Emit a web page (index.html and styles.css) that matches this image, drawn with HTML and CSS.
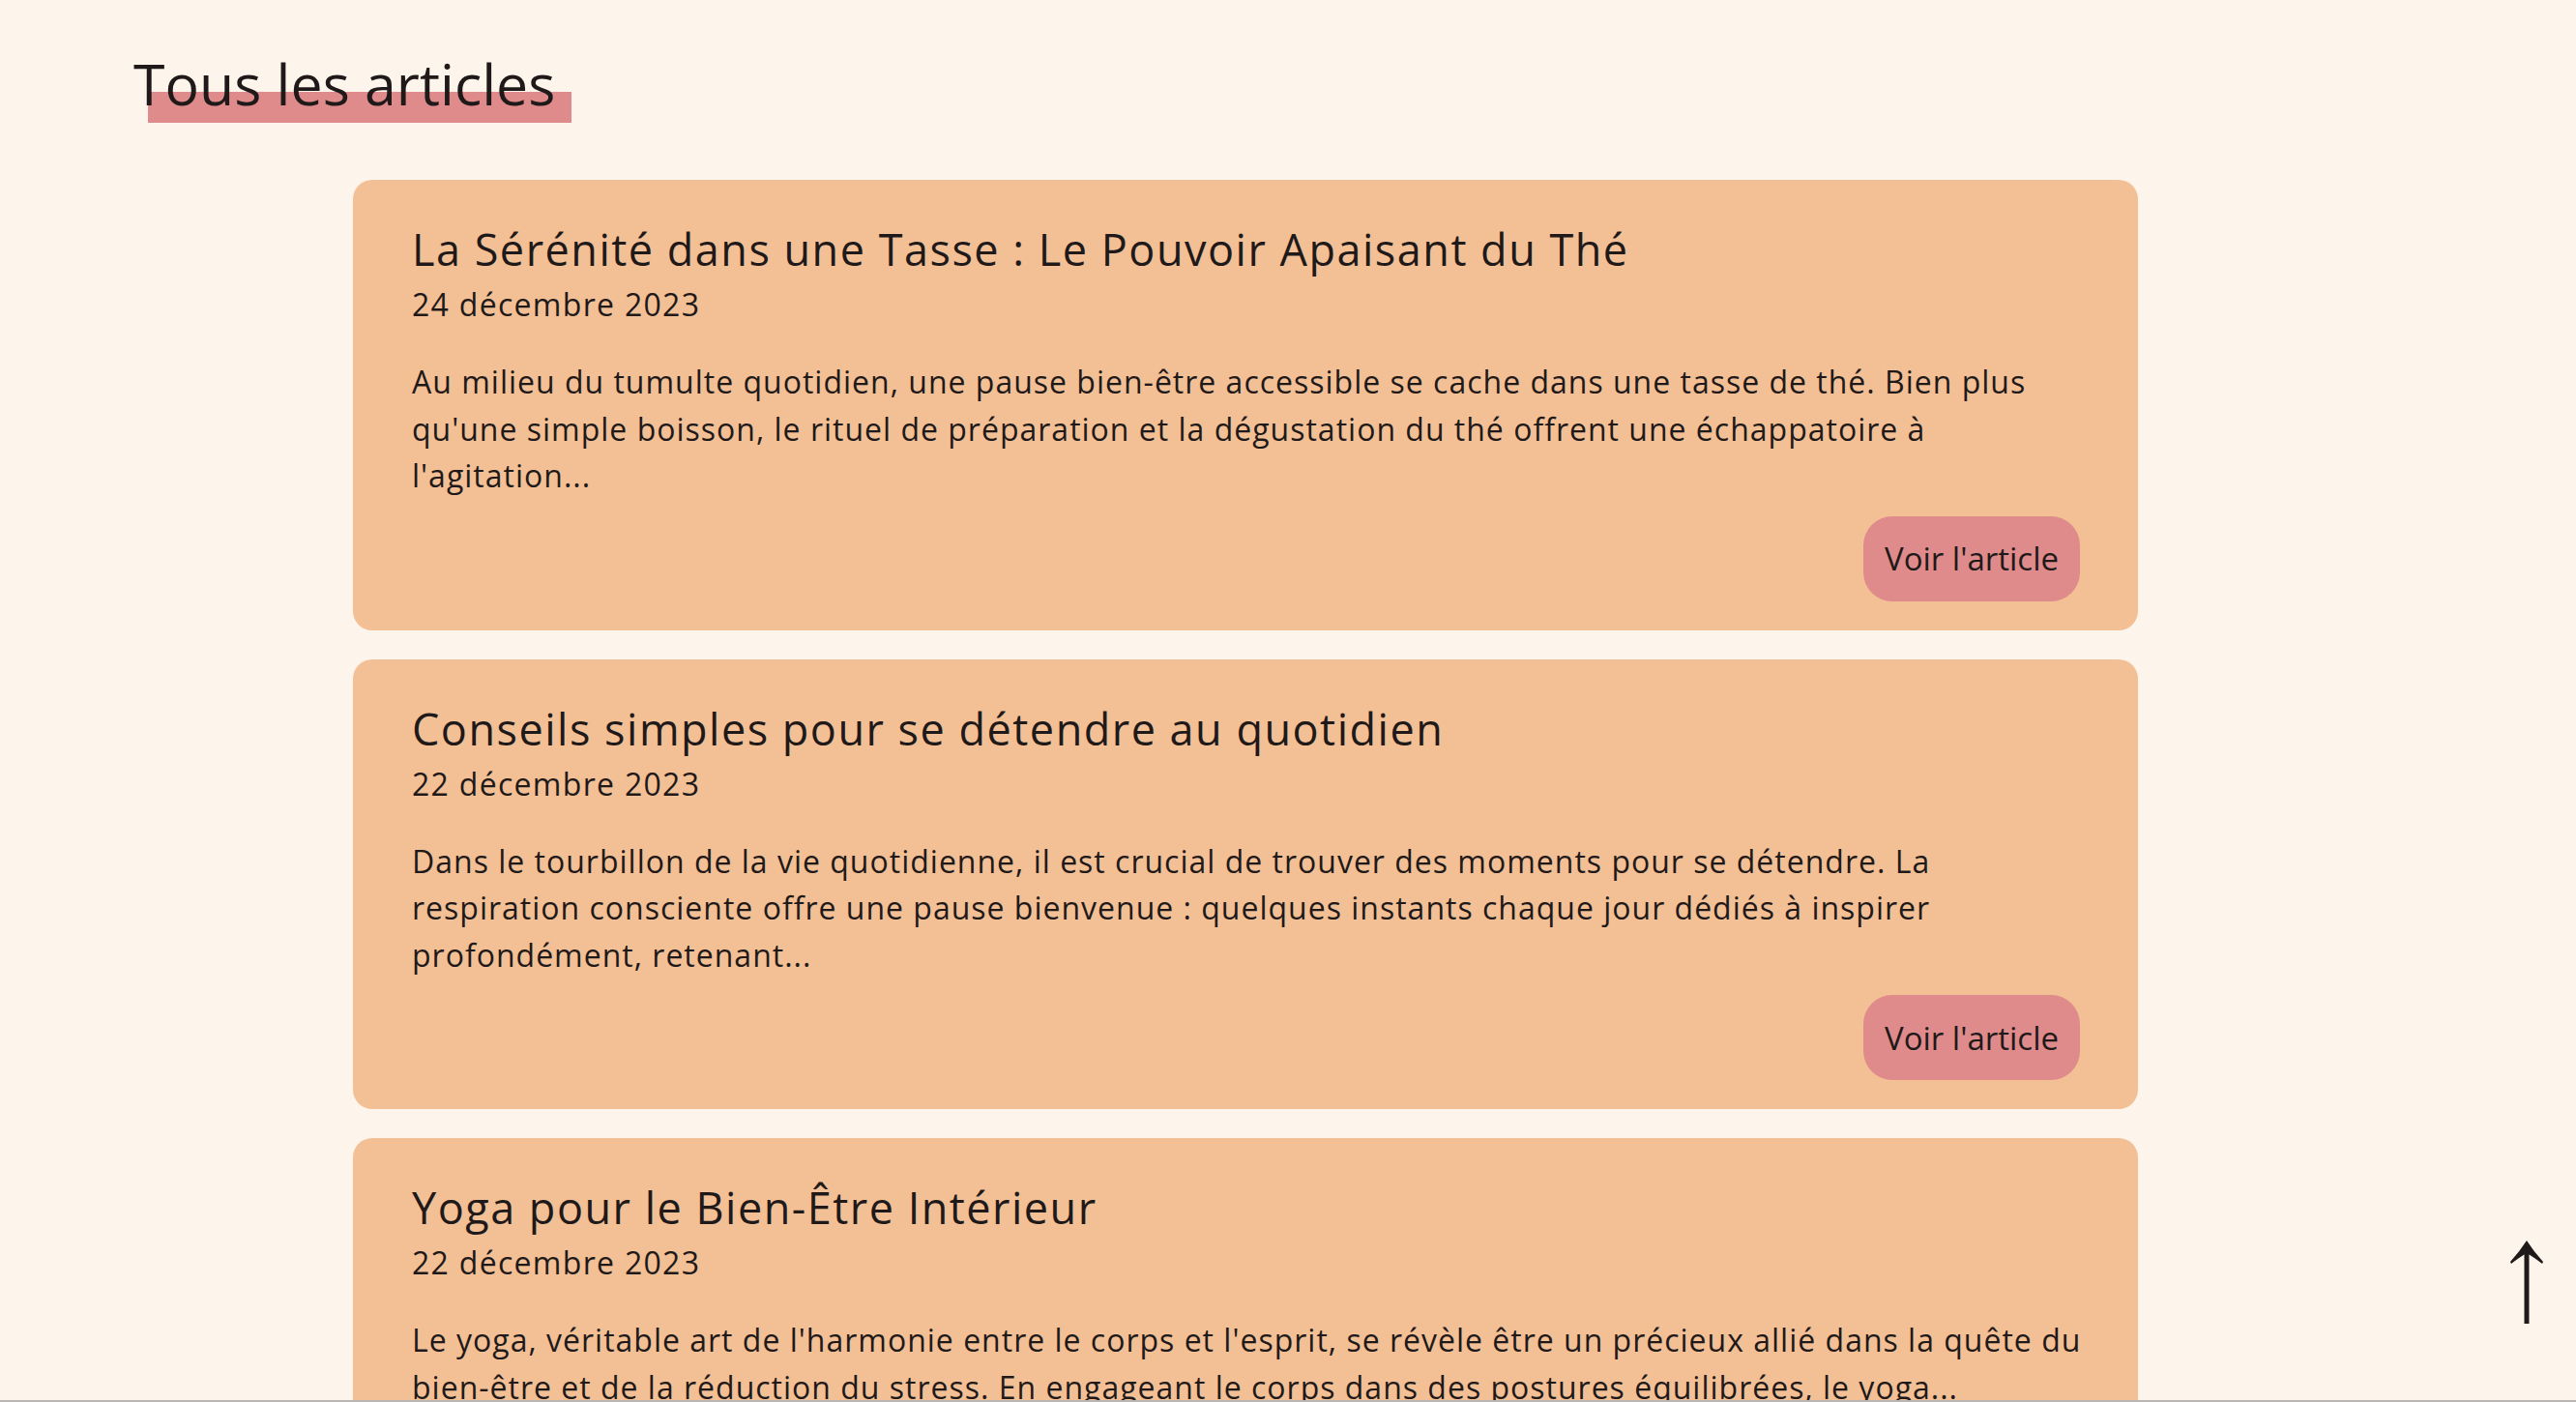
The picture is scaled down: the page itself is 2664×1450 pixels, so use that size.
FILE: index.html
```html
<!DOCTYPE html>
<html lang="fr">
<head>
<meta charset="utf-8">
<title>Tous les articles</title>
<link rel="stylesheet" href="styles.css">
</head>
<body>
<main class="page">
  <h1 class="page-title"><span class="page-title-text">Tous les articles</span></h1>
  <section class="articles">
    <article class="card">
      <h2 class="card-title">La Sérénité dans une Tasse : Le Pouvoir Apaisant du Thé</h2>
      <p class="card-date">24 décembre 2023</p>
      <p class="card-excerpt">Au milieu du tumulte quotidien, une pause bien-être accessible se cache dans une tasse de thé. Bien plus qu'une simple boisson, le rituel de préparation et la dégustation du thé offrent une échappatoire à l'agitation...</p>
      <div class="card-actions"><a class="btn" href="#">Voir l'article</a></div>
    </article>
    <article class="card">
      <h2 class="card-title">Conseils simples pour se détendre au quotidien</h2>
      <p class="card-date">22 décembre 2023</p>
      <p class="card-excerpt">Dans le tourbillon de la vie quotidienne, il est crucial de trouver des moments pour se détendre. La respiration consciente offre une pause bienvenue : quelques instants chaque jour dédiés à inspirer profondément, retenant...</p>
      <div class="card-actions"><a class="btn" href="#">Voir l'article</a></div>
    </article>
    <article class="card">
      <h2 class="card-title">Yoga pour le Bien-Être Intérieur</h2>
      <p class="card-date">22 décembre 2023</p>
      <p class="card-excerpt">Le yoga, véritable art de l'harmonie entre le corps et l'esprit, se révèle être un précieux allié dans la quête du bien-être et de la réduction du stress. En engageant le corps dans des postures équilibrées, le yoga...</p>
      <div class="card-actions"><a class="btn" href="#">Voir l'article</a></div>
    </article>
  </section>
</main>
<a class="to-top" href="#" aria-label="Retour en haut">
  <svg width="34" height="86" viewBox="0 0 34 86" aria-hidden="true">
    <rect x="14.5" y="8" width="5" height="78" fill="#1f1a19"/>
    <path d="M17 0 Q24 11 34 22 L33 24 Q24 17 17 13 Q10 17 1 24 L0 22 Q10 11 17 0 Z" fill="#1f1a19"/>
  </svg>
</a>
<div class="bottom-edge"></div>
</body>
</html>
```
FILE: styles.css
```css
* { box-sizing: border-box; }

html, body {
  margin: 0;
  padding: 0;
}

body {
  background: #fdf4eb;
  color: #1f1a19;
  font-family: "Open Sans", "Noto Sans", sans-serif;
}

.page {
  padding: 50px 0 60px 138px;
}

.page-title {
  margin: 0;
  font-size: 59px;
  line-height: 72px;
  font-weight: 400;
}

.page-title-text {
  position: relative;
  display: inline-block;
  z-index: 0;
}

.page-title-text::after {
  content: "";
  position: absolute;
  left: 15px;
  right: -17px;
  top: 45px;
  height: 32px;
  background: #df8a8b;
  z-index: -1;
}

.articles {
  margin: 64px 0 0 227px;
  width: 1846px;
  display: flex;
  flex-direction: column;
  gap: 30px;
}

.card {
  background: #f3c096;
  border-radius: 20px;
  padding: 44px 60px 30px 61px;
}

.card-title {
  margin: 0;
  font-size: 45px;
  line-height: 56px;
  font-weight: 500;
  letter-spacing: 1.5px;
}

.card-date {
  margin: 7px 0 0;
  font-size: 32px;
  line-height: 44px;
  font-weight: 400;
  letter-spacing: 1.3px;
}

.card-excerpt {
  margin: 34px -16px 0 0;
  font-size: 32px;
  line-height: 48.5px;
  font-weight: 400;
  letter-spacing: 1px;
}

.card-actions {
  display: flex;
  justify-content: flex-end;
  margin-top: 17px;
}

.btn {
  display: flex;
  align-items: center;
  justify-content: center;
  width: 224px;
  height: 88px;
  border-radius: 30px;
  background: #df8a8b;
  color: #1f1a19;
  text-decoration: none;
  font-size: 33px;
  font-weight: 400;
}

.to-top {
  position: fixed;
  right: 34px;
  bottom: 81px;
  display: block;
  width: 34px;
  height: 86px;
  line-height: 0;
}

.bottom-edge {
  position: fixed;
  left: 0;
  right: 0;
  bottom: 0;
  height: 2px;
  background: #b9b6b3;
}
```
